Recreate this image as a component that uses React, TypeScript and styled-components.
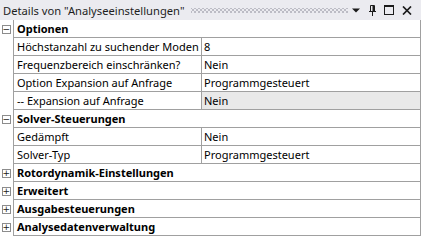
import styled, { createGlobalStyle } from "styled-components";

const GlobalStyle = createGlobalStyle`
  html, body {
    margin: 0;
    padding: 0;
    background: #ffffff;
  }
  body {
    font-family: "Noto Sans", "Open Sans", sans-serif;
    font-size: 11px;
    color: #000000;
  }
`;

type Prop = { name: string; value: string; readOnly?: boolean };
type Group = { title: string; open: boolean; items: Prop[] };

const groups: Group[] = [
  {
    title: "Optionen",
    open: true,
    items: [
      { name: "Höchstanzahl zu suchender Moden", value: "8" },
      { name: "Frequenzbereich einschränken?", value: "Nein" },
      { name: "Option Expansion auf Anfrage", value: "Programmgesteuert" },
      { name: "-- Expansion auf Anfrage", value: "Nein", readOnly: true },
    ],
  },
  {
    title: "Solver-Steuerungen",
    open: true,
    items: [
      { name: "Gedämpft", value: "Nein" },
      { name: "Solver-Typ", value: "Programmgesteuert" },
    ],
  },
  { title: "Rotordynamik-Einstellungen", open: false, items: [] },
  { title: "Erweitert", open: false, items: [] },
  { title: "Ausgabesteuerungen", open: false, items: [] },
  { title: "Analysedatenverwaltung", open: false, items: [] },
];

const App = () => {
  return (
    <>
      <GlobalStyle />
      <Panel>
        <TitleBar>
          <Title>Details von "Analyseeinstellungen"</Title>
          <Grip />
          <TitleButtons>
            <svg width="8" height="5" viewBox="0 0 8 5">
              <path d="M0 0.5 H8 L4 4.5 Z" fill="#1b1b1b" />
            </svg>
            <svg width="7" height="11" viewBox="0 0 7 11">
              <path d="M1.5 0.5 H5.5 M1.5 0.5 V6 M5.5 0.5 V6 M0 6.5 H7 M3.5 6.5 V11" stroke="#1b1b1b" strokeWidth="1" fill="none" />
              <rect x="3.5" y="1" width="2" height="5" fill="#1b1b1b" />
            </svg>
            <svg width="10" height="10" viewBox="0 0 10 10">
              <rect x="0.5" y="0.5" width="9" height="9" stroke="#1b1b1b" fill="none" />
              <path d="M0 1.5 H10" stroke="#1b1b1b" strokeWidth="1" />
            </svg>
            <svg width="10" height="9" viewBox="0 0 10 9">
              <path d="M1 0.5 L9 8.5 M9 0.5 L1 8.5" stroke="#1b1b1b" strokeWidth="1.7" />
            </svg>
          </TitleButtons>
        </TitleBar>
        <Grid>
          {groups.map((g) => (
            <div key={g.title}>
              <Row>
                <Gutter>
                  <Toggle>{g.open ? "−" : "+"}</Toggle>
                </Gutter>
                <Category>{g.title}</Category>
              </Row>
              {g.items.map((p) => (
                <Row key={p.name}>
                  <Gutter />
                  <NameCell>{p.name}</NameCell>
                  <ValueCell $readOnly={p.readOnly}>{p.value}</ValueCell>
                </Row>
              ))}
            </div>
          ))}
        </Grid>
      </Panel>
    </>
  );
};

export default App;

const Panel = styled.div`
  width: 421px;
  height: 237px;
  background: #ffffff;
  overflow: hidden;
`;

const TitleBar = styled.div`
  height: 20px;
  background: #ebebf0;
  display: flex;
  align-items: center;
  padding-left: 3px;
  box-sizing: border-box;
`;

const Title = styled.span`
  color: #1e1e1e;
  font-size: 11.2px;
  white-space: nowrap;
`;

const Grip = styled.div`
  flex: 1;
  height: 5px;
  margin: 1px 4px 0 7px;
  background-image: radial-gradient(circle, #a2a2ad 0.6px, transparent 0.9px),
    radial-gradient(circle, #a2a2ad 0.6px, transparent 0.9px);
  background-size: 4px 4px, 4px 4px;
  background-position: 0 0, 2px 2px;
`;

const TitleButtons = styled.div`
  display: flex;
  align-items: center;
  gap: 8px;
  padding-right: 9px;

  & > svg:first-child {
    margin-right: 1px;
  }
`;

const Grid = styled.div`
  display: flex;
  flex-direction: column;
`;

const Row = styled.div`
  display: flex;
  height: 18px;
`;

const Gutter = styled.div`
  width: 14px;
  flex-shrink: 0;
  box-sizing: border-box;
  border-right: 1px solid #a0a0a0;
  display: flex;
  align-items: center;
  justify-content: center;
`;

const Toggle = styled.div`
  width: 9px;
  height: 9px;
  box-sizing: border-box;
  border: 1px solid #8c8c8c;
  font-family: "DejaVu Sans", sans-serif;
  font-size: 9px;
  line-height: 7px;
  text-align: center;
  color: #1a1a1a;
  margin-left: -1px;
`;

const Category = styled.div`
  flex: 1;
  box-sizing: border-box;
  border-right: 1px solid #a0a0a0;
  border-bottom: 1px solid #a0a0a0;
  padding-left: 3px;
  font-weight: bold;
  line-height: 17px;
  white-space: nowrap;
`;

const NameCell = styled.div`
  width: 188px;
  flex-shrink: 0;
  box-sizing: border-box;
  border-right: 1px solid #a0a0a0;
  border-bottom: 1px solid #a0a0a0;
  padding-left: 3px;
  line-height: 17px;
  white-space: nowrap;
  overflow: hidden;
`;

const ValueCell = styled.div<{ $readOnly?: boolean }>`
  flex: 1;
  box-sizing: border-box;
  border-right: 1px solid #a0a0a0;
  border-bottom: 1px solid #a0a0a0;
  padding-left: 2px;
  line-height: 17px;
  white-space: nowrap;
  background: ${(p) => (p.$readOnly ? "#e9e9e9" : "#ffffff")};
`;
